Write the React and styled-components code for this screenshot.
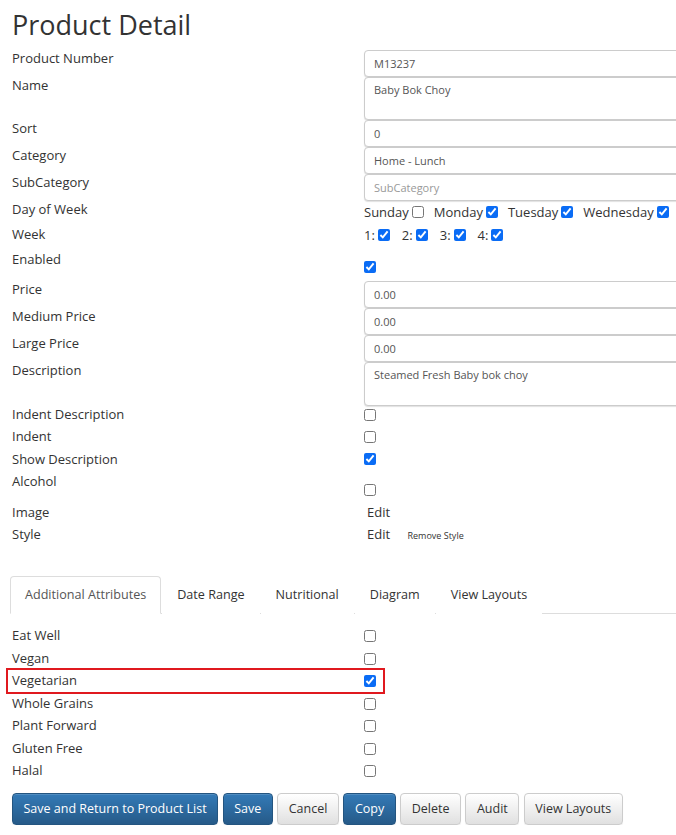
import React from "react";
import styled, { createGlobalStyle } from "styled-components";

const GlobalStyle = createGlobalStyle`
  html, body {
    margin: 0;
    padding: 0;
    overflow: hidden;
    background: #fff;
  }
  body {
    font-family: "Open Sans", "Liberation Sans", sans-serif;
    font-size: 13px;
    color: #333;
  }
`;

const days = [
  { name: "Sunday", on: false },
  { name: "Monday", on: true },
  { name: "Tuesday", on: true },
  { name: "Wednesday", on: true },
];

const attributes = [
  { name: "Eat Well", on: false },
  { name: "Vegan", on: false },
  { name: "Vegetarian", on: true, marked: true },
  { name: "Whole Grains", on: false },
  { name: "Plant Forward", on: false },
  { name: "Gluten Free", on: false },
  { name: "Halal", on: false },
];

export default function App() {
  return (
    <>
      <GlobalStyle />
      <Page>
        <Title>Product Detail</Title>
        <Form>
          <Row $h={27}>
            <Label>Product Number</Label>
            <Field defaultValue="M13237" />
          </Row>
          <Row $h={43}>
            <Label>Name</Label>
            <Area defaultValue="Baby Bok Choy" />
          </Row>
          <Row $h={27}>
            <Label>Sort</Label>
            <Field defaultValue="0" />
          </Row>
          <Row $h={27}>
            <Label>Category</Label>
            <Field defaultValue="Home - Lunch" />
          </Row>
          <Row $h={27}>
            <Label>SubCategory</Label>
            <Field placeholder="SubCategory" />
          </Row>
          <Row $h={25}>
            <Label>Day of Week</Label>
            <Inline $top={3}>
              {days.map((d) => (
                <Choice key={d.name} $gap={10}>
                  {d.name}
                  <Box type="checkbox" defaultChecked={d.on} />
                </Choice>
              ))}
            </Inline>
          </Row>
          <Row $h={25}>
            <Label>Week</Label>
            <Inline $top={1}>
              {[1, 2, 3, 4].map((n) => (
                <Choice key={n} $gap={12}>
                  {n}:
                  <Box type="checkbox" defaultChecked />
                </Choice>
              ))}
            </Inline>
          </Row>
          <Row $h={30}>
            <Label>Enabled</Label>
            <CheckCell $top={10}>
              <Box type="checkbox" defaultChecked />
            </CheckCell>
          </Row>
          <Row $h={27}>
            <Label>Price</Label>
            <Field defaultValue="0.00" />
          </Row>
          <Row $h={27}>
            <Label>Medium Price</Label>
            <Field defaultValue="0.00" />
          </Row>
          <Row $h={27}>
            <Label>Large Price</Label>
            <Field defaultValue="0.00" />
          </Row>
          <Row $h={44}>
            <Label>Description</Label>
            <Area defaultValue="Steamed Fresh Baby bok choy" />
          </Row>
          <Row $h={22}>
            <Label>Indent Description</Label>
            <CheckCell $top={3}>
              <Box type="checkbox" />
            </CheckCell>
          </Row>
          <Row $h={23}>
            <Label>Indent</Label>
            <CheckCell $top={3}>
              <Box type="checkbox" />
            </CheckCell>
          </Row>
          <Row $h={22}>
            <Label>Show Description</Label>
            <CheckCell $top={2}>
              <Box type="checkbox" defaultChecked />
            </CheckCell>
          </Row>
          <Row $h={31}>
            <Label>Alcohol</Label>
            <CheckCell $top={11}>
              <Box type="checkbox" />
            </CheckCell>
          </Row>
          <Row $h={22}>
            <Label>Image</Label>
            <Plain>Edit</Plain>
          </Row>
          <Row $h={22}>
            <Label>Style</Label>
            <Plain>
              Edit <Small>Remove Style</Small>
            </Plain>
          </Row>
        </Form>

        <Tabs>
          <Tab $active>Additional Attributes</Tab>
          <Tab>Date Range</Tab>
          <Tab>Nutritional</Tab>
          <Tab>Diagram</Tab>
          <Tab>View Layouts</Tab>
        </Tabs>

        <Attributes>
          {attributes.map((a) => (
            <AttrRow key={a.name} $marked={a.marked}>
              <Label>{a.name}</Label>
              <CheckCell $top={3}>
                <Box type="checkbox" defaultChecked={a.on} />
              </CheckCell>
            </AttrRow>
          ))}
        </Attributes>

        <Actions>
          <Button $primary>Save and Return to Product List</Button>
          <Button $primary>Save</Button>
          <Button>Cancel</Button>
          <Button $primary>Copy</Button>
          <Button>Delete</Button>
          <Button>Audit</Button>
          <Button>View Layouts</Button>
        </Actions>
      </Page>
    </>
  );
}

const Page = styled.div`
  width: 800px;
  padding: 6px 0 0 12px;
  box-sizing: border-box;
`;

const Title = styled.h1`
  margin: 0 0 6px;
  font-size: 27px;
  font-weight: 400;
  line-height: 38px;
  color: #333;
`;

const Form = styled.div`
  display: flex;
  flex-direction: column;
`;

const Row = styled.div`
  display: grid;
  grid-template-columns: 352px 1fr;
  height: ${(p) => p.$h}px;
  align-items: start;
`;

const Label = styled.div`
  font-size: 13px;
  font-weight: 500;
  line-height: 16px;
  color: #333;
  white-space: nowrap;
`;

const inputBase = `
  box-sizing: border-box;
  width: 100%;
  margin: 0;
  padding: 5px 9px;
  border: 1px solid #ccc;
  border-radius: 4px;
  box-shadow: 0 1px 1px rgba(0, 0, 0, 0.12);
  font-family: "Open Sans", "Liberation Sans", sans-serif;
  font-size: 11px;
  color: #555;
  background: #fff;
  outline: none;
  &::placeholder {
    color: #999;
  }
`;

const Field = styled.input`
  ${inputBase}
  height: 27px;
`;

const Area = styled.textarea`
  ${inputBase}
  height: 100%;
  padding-top: 4px;
  resize: none;
  line-height: 15px;
`;

const Inline = styled.div`
  display: flex;
  align-items: center;
  padding-top: ${(p) => p.$top}px;
`;

const Choice = styled.label`
  display: inline-flex;
  align-items: center;
  font-size: 13px;
  line-height: 16px;
  margin-right: ${(p) => p.$gap}px;
  white-space: nowrap;
`;

const Box = styled.input`
  width: 12px;
  height: 12px;
  margin: 0 0 0 3px;
  accent-color: #0a6cf5;
`;

const CheckCell = styled.div`
  padding-top: ${(p) => p.$top}px;
  line-height: 0;
  & > ${Box} {
    margin-left: 0;
  }
`;

const Plain = styled.div`
  font-size: 13px;
  line-height: 16px;
  padding-left: 3px;
`;

const Small = styled.span`
  font-size: 9px;
  margin-left: 14px;
`;

const Tabs = styled.div`
  display: flex;
  margin-top: 28px;
  margin-left: -2px;
  width: 666px;
  border-bottom: 1px solid #ddd;
`;

const Tab = styled.div`
  padding: 9px 14px 10px;
  margin-right: 1px;
  margin-bottom: -1px;
  font-size: 12.6px;
  line-height: 17px;
  color: ${(p) => (p.$active ? "#555" : "#333")};
  border: 1px solid ${(p) => (p.$active ? "#ddd" : "transparent")};
  border-bottom-color: ${(p) => (p.$active ? "#fff" : "transparent")};
  border-radius: 4px 4px 0 0;
  background: #fff;
`;

const Attributes = styled.div`
  display: flex;
  flex-direction: column;
  padding-top: 13px;
`;

const AttrRow = styled.div`
  position: relative;
  display: grid;
  grid-template-columns: 352px 1fr;
  height: 22.5px;
  align-items: start;
  &::after {
    content: "";
    display: ${(p) => (p.$marked ? "block" : "none")};
    position: absolute;
    left: -6px;
    top: -4px;
    width: 379px;
    height: 26px;
    border: 2px solid #e0191f;
    box-sizing: border-box;
  }
`;

const Actions = styled.div`
  display: flex;
  gap: 4.5px;
  margin-top: 8px;
`;

const Button = styled.button`
  height: 32px;
  padding: 0 10.5px;
  font-family: "Open Sans", "Liberation Sans", sans-serif;
  font-size: 12.5px;
  border-radius: 4px;
  cursor: pointer;
  color: ${(p) => (p.$primary ? "#fff" : "#333")};
  border: 1px solid ${(p) => (p.$primary ? "#245580" : "#ccc")};
  background: ${(p) =>
    p.$primary
      ? "linear-gradient(to bottom, #337ab7 0%, #265a88 100%)"
      : "linear-gradient(to bottom, #fff 0%, #e0e0e0 100%)"};
  box-shadow: inset 0 1px 0 rgba(255, 255, 255, 0.15), 0 1px 1px rgba(0, 0, 0, 0.075);
`;
